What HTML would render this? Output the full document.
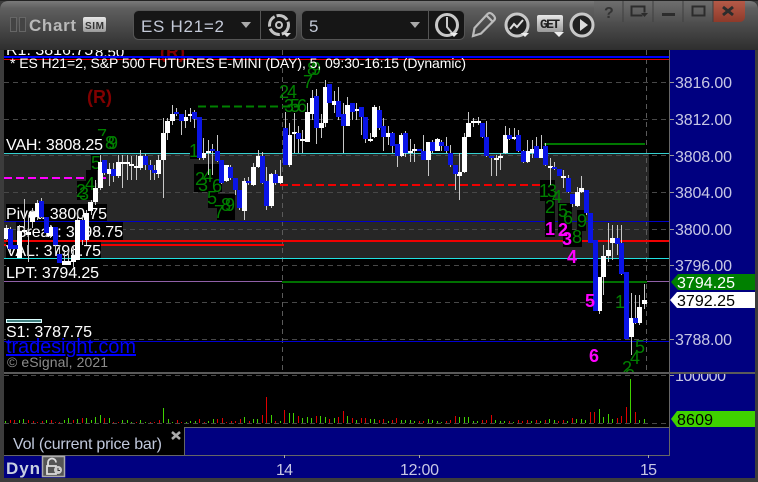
<!DOCTYPE html>
<html><head><meta charset="utf-8"><title>Chart</title>
<style>
html,body{margin:0;padding:0;background:#333;width:758px;height:482px;overflow:hidden}
svg{display:block;position:absolute;left:0;top:0}
text{font-family:"Liberation Sans",sans-serif;white-space:pre}
.ax{font-size:16px;fill:#c8c8e4}
.lb{font-size:16px;fill:#fff}
.n{font-size:18px;fill:#008000}
.m{font-size:18px;fill:#ff00ff;font-weight:bold}
.bg{fill:#000}
</style></head><body>
<svg width="758" height="482" viewBox="0 0 758 482" xmlns="http://www.w3.org/2000/svg">
<defs>
<linearGradient id="tb" x1="0" y1="0" x2="0" y2="1"><stop offset="0" stop-color="#7a7a7a"/><stop offset=".15" stop-color="#5f5f5f"/><stop offset="1" stop-color="#2e2e2e"/></linearGradient>
<linearGradient id="wb" x1="0" y1="0" x2="0" y2="1"><stop offset="0" stop-color="#6e6e6e"/><stop offset="1" stop-color="#505050"/></linearGradient>
<linearGradient id="rb" x1="0" y1="0" x2="0" y2="1"><stop offset="0" stop-color="#b55a48"/><stop offset="1" stop-color="#8e3a2a"/></linearGradient>
<linearGradient id="get" x1="0" y1="0" x2="0" y2="1"><stop offset="0" stop-color="#e8e8e8"/><stop offset="1" stop-color="#9a9a9a"/></linearGradient>
<clipPath id="chart"><rect x="4" y="50" width="665" height="322"/></clipPath>
<clipPath id="axv"><rect x="670" y="374" width="85" height="20"/></clipPath>
</defs>
<!-- frame -->
<rect width="758" height="482" fill="#3c3c3c"/>
<path d="M0 50V10Q0 1 9 1H749Q758 1 758 10V50Z" fill="url(#tb)"/>
<rect x="0" y="0" width="758" height="1" fill="#222"/>
<rect x="4" y="50" width="665" height="377" fill="#000"/>
<rect x="669" y="50" width="86" height="428" fill="#000080"/>
<rect x="4" y="427" width="751" height="51" fill="#000080"/>
<rect x="4" y="427" width="180" height="28" fill="#000"/>
<rect x="184" y="427" width="485" height="1" fill="#666"/>
<rect x="184" y="427" width="1" height="28" fill="#666"/>
<rect x="4" y="455" width="666" height="1" fill="#666"/>
<rect x="669" y="50" width="1" height="406" fill="#666"/>
<!-- toolbar -->
<rect x="10.500" y="17.500" width="6" height="14" fill="#444" stroke="#666"/>
<rect x="19.500" y="17.500" width="6" height="14" fill="#444" stroke="#666"/>
<text x="29" y="31" style="font-size:17px;font-weight:bold;fill:#b8b8b8" textLength="47">Chart</text>
<rect x="83" y="17" width="23" height="15" rx="2" fill="url(#get)"/>
<text x="85" y="29" style="font-size:10px;font-weight:bold;fill:#333" textLength="19">SIM</text>
<rect x="133.500" y="10.500" width="163" height="29" rx="5" fill="#161616" stroke="#555"/>
<rect x="260" y="11" width="1" height="28" fill="#555"/>
<text x="141" y="32" style="font-size:17px;fill:#c4cad8" textLength="83">ES H21=2</text>
<path d="M241 22h10l-5 6z" fill="#aaa"/>
<circle cx="279" cy="25" r="9.500" fill="none" stroke="#c4c4c4" stroke-width="3" stroke-dasharray="12 2"/>
<circle cx="279" cy="25" r="3" fill="none" stroke="#c4c4c4" stroke-width="2"/>
<path d="M283 33h8l-4 4z" fill="#ddd"/>
<rect x="301.500" y="10.500" width="163" height="29" rx="5" fill="#161616" stroke="#555"/>
<rect x="428" y="11" width="1" height="28" fill="#555"/>
<text x="309" y="32" style="font-size:17px;fill:#c4cad8">5</text>
<path d="M410 22h10l-5 6z" fill="#aaa"/>
<circle cx="447" cy="25" r="10.500" fill="none" stroke="#c8c8c8" stroke-width="3"/>
<path d="M447 17v10l5 6" fill="none" stroke="#c8c8c8" stroke-width="2"/>
<path d="M450 33h8l-4 4z" fill="#eee"/>
<path d="M473 36l1.500-8 13-14q2-2 4.500 0l2 2q2 2.500 0 4.500l-13 13z M487 16l6 6" fill="none" stroke="#bbb" stroke-width="2.200"/>
<circle cx="517" cy="25" r="11" fill="#222" stroke="#c8c8c8" stroke-width="3"/>
<path d="M510 29l4-5 3 3 6-7" fill="none" stroke="#ddd" stroke-width="2"/>
<path d="M521 33h8l-4 4z" fill="#eee"/>
<rect x="537" y="15" width="26" height="17" rx="2" fill="url(#get)"/>
<text x="540" y="28" style="font-size:13px;font-weight:bold;font-family:'Liberation Mono',monospace;fill:#222" textLength="20">GET</text>
<path d="M554 32h10l-5 5z" fill="#eee"/>
<circle cx="582" cy="25" r="11" fill="#222" stroke="#c8c8c8" stroke-width="3"/>
<path d="M580 19l8 6-8 6z" fill="#ddd"/>
<!-- window buttons -->
<path d="M594 1H713V22H600Q594 22 594 16Z" fill="url(#wb)"/>
<path d="M713 1H745V16Q745 22 739 22H713Z" fill="url(#rb)"/>
<path d="M623 1v21M653 1v21M683 1v21M713 1v21" stroke="#3f3f3f"/>
<text x="604" y="18" style="font-size:16px;font-weight:bold;fill:#333">?</text>
<path d="M642.500 15.500h-11v-9h13v6" fill="none" stroke="#2c2c2c" stroke-width="2"/>
<path d="M641 13h7l-3.500 4z" fill="#2c2c2c"/>
<rect x="662" y="13" width="13" height="3" fill="#2c2c2c"/>
<rect x="692.500" y="6.500" width="12" height="9" fill="none" stroke="#2c2c2c" stroke-width="2"/>
<path d="M723 7l10 8M733 7l-10 8" stroke="#2c2c2c" stroke-width="3"/>

<g clip-path="url(#chart)">
<!-- value area -->
<rect x="4" y="153" width="645" height="105" fill="#262626"/>
<!-- grid -->
<path d="M4 82.500H669M4 119.500H669M4 155.500H669M4 192.500H669M4 229.500H669M4 265.500H669M4 302.500H669M4 339.500H669" stroke="#484848" stroke-dasharray="5 4" fill="none"/>
<path d="M282.500 50V373M646.500 50V373" stroke="#5a5a5a" stroke-dasharray="5 4" fill="none"/>
<!-- clipped top labels -->
<text x="6" y="55" class="lb">R1: 3816.75</text>
<text x="95" y="57" class="lb" style="font-size:15px">8.50</text>
<text x="160" y="58" style="font-size:18px;font-weight:bold;fill:#800000">(R)</text>
<rect x="4" y="56" width="665" height="2" fill="#0000ff"/>
<rect x="4" y="59" width="665" height="1" fill="#e00000"/>
<text x="87" y="103" style="font-size:18px;font-weight:bold;fill:#800000">(R)</text>
<!-- level lines -->
<rect x="4" y="153" width="665" height="1" fill="#35d0d0"/>
<rect x="4" y="258" width="665" height="1" fill="#20e0e0"/>
<rect x="4" y="221" width="665" height="1" fill="#0000c8"/>
<rect x="4" y="240" width="665" height="2" fill="#f00000"/>
<rect x="4" y="244" width="280" height="2" fill="#f00000"/>
<rect x="4" y="281" width="665" height="1" fill="#9060a8"/>
<rect x="282" y="281" width="365" height="2" fill="#007000"/>
<rect x="4" y="341" width="665" height="1" fill="#0000d0"/>
<rect x="544" y="143" width="101" height="2" fill="#007800"/>
<path d="M198 106.500H300" stroke="#008000" stroke-width="2" stroke-dasharray="8 4" fill="none"/>
<path d="M4 178H106" stroke="#ff00ff" stroke-width="2" stroke-dasharray="8 4" fill="none"/>
<path d="M280 185H545" stroke="#f00000" stroke-width="2" stroke-dasharray="8 4" fill="none"/>
<!-- sequence numbers -->
<g class="bg">
<rect x="91" y="155" width="9" height="15"/><rect x="86" y="170" width="11" height="13"/><rect x="77" y="181" width="18" height="19"/>
<rect x="190" y="143" width="10" height="16"/><rect x="194" y="164" width="28" height="28"/><rect x="208" y="190" width="10" height="18"/><rect x="217" y="194" width="18" height="26"/>
<rect x="540" y="180" width="15" height="21"/><rect x="545" y="201" width="10" height="36"/><rect x="558" y="203" width="14" height="30"/><rect x="577" y="210" width="9" height="21"/><rect x="563" y="230" width="19" height="17"/>
</g>
<g class="n">
<text x="97" y="142">7</text><text x="105" y="149">8</text><text x="108" y="149">9</text>
<text x="91" y="169">5</text><text x="85" y="190">4</text><text x="76" y="197">2</text><text x="79" y="200">3</text>
<text x="189" y="157">1</text><text x="195" y="185">2</text><text x="203" y="182">4</text><text x="198" y="191">3</text><text x="212" y="192">6</text><text x="207" y="204">5</text><text x="214" y="218">7</text><text x="221" y="211">8</text><text x="225" y="211">9</text>
<text x="279" y="98">2</text><text x="287" y="98">4</text><text x="284" y="112">3</text><text x="290" y="112">5</text><text x="297" y="112">6</text><text x="303" y="88">7</text><text x="307" y="75">8</text><text x="311" y="75">9</text>
<text x="539" y="197">1</text><text x="547" y="197">3</text><text x="552" y="203">4</text><text x="545" y="213">2</text><text x="558" y="217">5</text><text x="563" y="224">6</text><text x="577" y="227">9</text><text x="572" y="243">8</text>
</g>
<!-- labels -->
<rect x="6" y="136" width="97" height="17" class="bg"/><text x="6" y="150" class="lb" textLength="97">VAH: 3808.25</text>
<rect x="6" y="204" width="101" height="17" class="bg"/><text x="6" y="219" class="lb" textLength="101">Pivot: 3800.75</text>
<rect x="16" y="222" width="107" height="18" class="bg"/><text x="16" y="237" class="lb" textLength="107">Break: 3798.75</text>
<rect x="6" y="242" width="95" height="16" class="bg"/><text x="6" y="256" class="lb" textLength="95">VAL: 3796.75</text>
<rect x="6" y="264" width="93" height="17" class="bg"/><text x="6" y="278" class="lb" textLength="93">LPT: 3794.25</text>
<rect x="6" y="324" width="86" height="17" class="bg"/><text x="6" y="337" class="lb" textLength="86">S1: 3787.75</text>
<rect x="6.500" y="319.500" width="35" height="3" fill="#408080" stroke="#dff" stroke-width="1"/>
<!-- wicks -->
<path stroke="#c8c8c8" fill="none" d="M6.500 225V240M10.500 227V252M19.500 225V258M24.500 199V232M28.500 215V262M32.500 208V228M37.500 200V220M41.500 198V218M46.500 217V237M50.500 225V238M55.500 227V255M59.500 245V263M64.500 250V265M68.500 250V265M73.500 245V267M77.500 210V260M82.500 215V245M86.500 210V245M91.500 200V215M95.500 180V205M100.500 155V190M104.500 160V175M109.500 163V186M113.500 163V182M118.500 155V178M122.500 155V188M127.500 155V180M131.500 156V180M136.500 155V180M140.500 150V170M145.500 154V170M150.500 160V180M154.500 165V180M158.500 155V178M163.500 118V198M167.500 118V140M172.500 105V125M176.500 108V116M181.500 114V135M185.500 110V128M190.500 108V122M194.500 110V128M199.500 117V160M203.500 138V160M208.500 140V175M212.500 144V175M217.500 135V162M221.500 160V184M226.500 165V182M230.500 165V180M235.500 178V195M239.500 190V210M244.500 178V220M248.500 177V185M253.500 163V186M258.500 150V168M262.500 152V184M266.500 167V210M271.500 173V208M275.500 170V185M280.500 160V184M285.500 112V165M289.500 123V167M294.500 113V153M298.500 126V153M302.500 130V153M307.500 103V142M312.500 90V120M316.500 89V144M321.500 114V138M325.500 80V127M334.500 91V113M338.500 87V120M343.500 103V153M347.500 97V126M352.500 103V120M356.500 103V120M361.500 107V135M365.500 117V143M370.500 133V142M374.500 105V138M379.500 106V130M383.500 118V151M388.500 126V145M392.500 132V153M397.500 144V167M401.500 133V157M405.500 131V157M410.500 139V162M414.500 144V162M423.500 135V160M428.500 142V176M432.500 140V153M437.500 138V151M441.500 140V151M446.500 137V153M450.500 145V167M455.500 165V190M459.500 153V200M464.500 133V173M468.500 112V137M473.500 118V127M478.500 117V125M482.500 123V138M486.500 121V157M491.500 156V176M496.500 155V176M500.500 153V170M505.500 126V154M509.500 128V140M514.500 128V140M518.500 130V152M523.500 150V163M527.500 140V163M532.500 140V158M536.500 137V158M541.500 135V158M545.500 143V166M550.500 158V185M554.500 162V170M563.500 170V188M568.500 175V193M572.500 194V207M577.500 187V207M581.500 176V193M586.500 190V215M599.500 277V314M603.500 245V295M608.500 223V262M612.500 225V260M617.500 225V255M621.500 225V275M631.500 293V355M635.500 295V324M639.500 295V325M644.500 284V309"/>
<!-- white bodies -->
<path fill="#fff" d="M4 228h5v11h-5zM17 231h5v27h-5zM22 230h5v2h-5zM26 232h5v3h-5zM30 212h5v10h-5zM35 203h5v14h-5zM48 227h5v9h-5zM62 261h5v4h-5zM66 261h5v4h-5zM71 255h5v7h-5zM75 220h5v40h-5zM84 213h5v27h-5zM88 202h5v9h-5zM93 188h5v14h-5zM98 162h5v26h-5zM107 169h5v5h-5zM116 162h5v14h-5zM120 162h5v2h-5zM125 162h5v2h-5zM129 164h5v2h-5zM134 166h5v2h-5zM138 156h5v12h-5zM156 160h5v14h-5zM161 133h5v27h-5zM165 121h5v12h-5zM170 114h5v7h-5zM183 117h5v4h-5zM188 114h5v2h-5zM201 153h5v5h-5zM206 151h5v2h-5zM224 165h5v16h-5zM242 181h5v30h-5zM251 167h5v18h-5zM256 156h5v11h-5zM269 174h5v32h-5zM278 176h5v7h-5zM287 135h5v30h-5zM292 132h5v2h-5zM300 139h5v2h-5zM305 112h5v30h-5zM310 98h5v16h-5zM319 123h5v5h-5zM323 87h5v36h-5zM332 101h5v4h-5zM345 105h5v21h-5zM354 109h5v2h-5zM368 139h5v2h-5zM372 107h5v30h-5zM386 133h5v4h-5zM399 135h5v21h-5zM408 151h5v2h-5zM412 149h5v2h-5zM426 142h5v18h-5zM435 139h5v12h-5zM457 172h5v4h-5zM462 137h5v35h-5zM466 123h5v14h-5zM471 121h5v2h-5zM476 121h5v2h-5zM494 158h5v2h-5zM498 156h5v2h-5zM503 135h5v18h-5zM512 137h5v2h-5zM525 151h5v11h-5zM530 149h5v4h-5zM539 149h5v9h-5zM548 166h5v2h-5zM561 176h5v2h-5zM575 192h5v14h-5zM579 188h5v4h-5zM597 277h5v34h-5zM601 256h5v21h-5zM606 250h5v6h-5zM610 238h5v5h-5zM629 318h5v19h-5zM637 307h5v16h-5zM642 300h5v4h-5z"/>
<!-- blue bodies -->
<path fill="#0a14e6" d="M8 229h5v20h-5zM13 245h5v4h-5zM39 201h5v16h-5zM44 217h5v16h-5zM53 227h5v18h-5zM57 254h5v9h-5zM80 220h5v20h-5zM102 160h5v13h-5zM111 169h5v7h-5zM143 156h5v9h-5zM148 165h5v5h-5zM152 170h5v3h-5zM174 112h5v2h-5zM179 114h5v7h-5zM192 112h5v7h-5zM197 117h5v41h-5zM210 149h5v2h-5zM215 151h5v10h-5zM219 160h5v23h-5zM228 167h5v11h-5zM233 178h5v12h-5zM237 190h5v18h-5zM246 181h5v2h-5zM260 156h5v27h-5zM264 181h5v25h-5zM273 174h5v9h-5zM283 128h5v37h-5zM296 133h5v6h-5zM314 96h5v32h-5zM327 84h5v19h-5zM336 101h5v16h-5zM341 114h5v12h-5zM350 103h5v9h-5zM359 107h5v10h-5zM363 117h5v22h-5zM377 110h5v18h-5zM381 126h5v11h-5zM390 133h5v13h-5zM395 144h5v12h-5zM403 133h5v20h-5zM417 149h5v2h-5zM421 151h5v9h-5zM430 142h5v9h-5zM439 142h5v4h-5zM444 146h5v5h-5zM448 153h5v12h-5zM453 165h5v9h-5zM480 123h5v14h-5zM484 137h5v19h-5zM489 156h5v2h-5zM507 135h5v4h-5zM516 135h5v16h-5zM521 151h5v11h-5zM534 146h5v12h-5zM543 146h5v19h-5zM552 167h5v2h-5zM557 169h5v7h-5zM566 178h5v14h-5zM570 194h5v10h-5zM584 190h5v23h-5zM588 213h5v30h-5zM593 240h5v71h-5zM615 238h5v6h-5zM619 243h5v31h-5zM624 272h5v67h-5zM633 318h5v5h-5z"/>
<!-- magenta numbers -->
<g class="m">
<text x="545" y="235">1</text><text x="558" y="236">2</text><text x="562" y="245">3</text><text x="567" y="263">4</text><text x="585" y="307">5</text><text x="589" y="362">6</text>
</g>
<g class="n">
<text x="615" y="308">1</text><text x="635" y="353">5</text><text x="630" y="364">4</text><text x="622" y="374">2</text><text x="625" y="382">3</text>
</g>
<!-- logo -->
<text x="6" y="353" style="font-size:20px;fill:#0000ff;text-decoration:underline" textLength="130">tradesight.com</text>
<text x="7" y="367" style="font-size:14px;fill:#8c8c8c" textLength="101">© eSignal, 2021</text>
<text x="10" y="68" style="font-size:14px;fill:#fff" textLength="456">* ES H21=2, S&amp;P 500 FUTURES E-MINI (DAY), 5, 09:30-16:15 (Dynamic)</text>
</g>
<!-- volume pane -->
<rect x="4" y="372" width="751" height="2" fill="#5a5a5a"/>
<path d="M4 375.500H669M4 423.500H669" stroke="#484848" stroke-dasharray="5 4" fill="none"/>
<path stroke="#3fd200" fill="none" d="M5.500 421V423M19.500 420V423M23.500 419V423M46.500 420V423M64.500 420V423M68.500 418V423M77.500 419V423M86.500 418V423M91.500 420V423M95.500 417V423M100.500 415V423M109.500 418V423M122.500 420V423M127.500 420V423M131.500 422V423M140.500 420V423M145.500 422V423M163.500 408V423M168.500 419V423M172.500 422V423M186.500 422V423M190.500 421V423M195.500 421V423M208.500 421V423M213.500 419V423M244.500 417V423M253.500 419V423M257.500 419V423M271.500 415V423M280.500 421V423M289.500 413V423M293.500 413V423M302.500 418V423M307.500 417V423M311.500 418V423M320.500 416V423M325.500 417V423M334.500 418V423M347.500 416V423M356.500 420V423M370.500 419V423M374.500 419V423M388.500 421V423M401.500 420V423M405.500 420V423M410.500 420V423M414.500 421V423M428.500 419V423M432.500 420V423M437.500 421V423M441.500 422V423M459.500 417V423M464.500 417V423M468.500 417V423M473.500 421V423M477.500 421V423M495.500 420V423M500.500 421V423M504.500 421V423M513.500 422V423M531.500 421V423M540.500 421V423M549.500 419V423M554.500 420V423M567.500 421V423M576.500 419V423M581.500 419V423M585.500 420V423M599.500 409V423M603.500 417V423M608.500 414V423M612.500 419V423M630.500 379V423M639.500 420V423M644.500 419V423"/>
<path stroke="#e00000" fill="none" d="M10.500 420V423M14.500 420V423M28.500 420V423M33.500 421V423M37.500 422V423M42.500 421V423M51.500 420V423M55.500 422V423M59.500 422V423M73.500 420V423M82.500 418V423M104.500 418V423M113.500 422V423M118.500 422V423M136.500 422V423M150.500 422V423M154.500 422V423M159.500 420V423M177.500 420V423M181.500 422V423M199.500 419V423M204.500 422V423M217.500 419V423M222.500 418V423M226.500 422V423M231.500 421V423M235.500 421V423M240.500 419V423M249.500 421V423M262.500 415V423M266.500 397V423M275.500 421V423M284.500 410V423M298.500 416V423M316.500 416V423M329.500 419V423M338.500 417V423M343.500 411V423M352.500 418V423M361.500 418V423M365.500 418V423M379.500 420V423M383.500 419V423M392.500 420V423M396.500 418V423M419.500 421V423M423.500 421V423M446.500 421V423M450.500 420V423M455.500 416V423M482.500 420V423M486.500 420V423M491.500 415V423M509.500 421V423M518.500 420V423M522.500 421V423M527.500 420V423M536.500 420V423M545.500 420V423M558.500 421V423M563.500 420V423M572.500 418V423M590.500 412V423M594.500 412V423M617.500 418V423M621.500 416V423M626.500 407V423M635.500 412V423"/>
<text x="13" y="449" style="font-size:16px;fill:#c0c8dc" textLength="149">Vol (current price bar)</text>
<path d="M172 432l8 7M180 432l-8 7" stroke="#aaa" stroke-width="2.500"/>
<!-- right axis -->
<g class="ax">
<text x="675" y="88" textLength="57">3816.00</text>
<text x="675" y="125" textLength="57">3812.00</text>
<text x="675" y="162" textLength="57">3808.00</text>
<text x="675" y="198" textLength="57">3804.00</text>
<text x="675" y="235" textLength="57">3800.00</text>
<text x="675" y="271" textLength="57">3796.00</text>
<text x="675" y="345" textLength="57">3788.00</text>
<g clip-path="url(#axv)"><text x="675" y="381" textLength="51">100000</text></g>
</g>
<path d="M670 82.500h4M670 119.500h4M670 155.500h4M670 192.500h4M670 229.500h4M670 265.500h4M670 339.500h4M670 375.500h4" stroke="#999" fill="none"/>
<path d="M671 282l7-8H755V290H678Z" fill="#008000"/>
<text x="677" y="288" class="ax" style="fill:#fff" textLength="58">3794.25</text>
<path d="M670 300l7-8H755V308H677Z" fill="#fff"/>
<text x="677" y="306" style="font-size:16px;fill:#000" textLength="58">3792.25</text>
<path d="M671 419l6-8H755V427H677Z" fill="#3fd200"/>
<text x="677" y="425" style="font-size:16px;fill:#000" textLength="36">8609</text>
<!-- time axis -->
<path d="M284.500 455v3M419.500 455v3M648.500 455v3" stroke="#aaa" fill="none"/>
<g class="ax">
<text x="276" y="475" textLength="17">14</text>
<text x="400" y="475" textLength="39">12:00</text>
<text x="640" y="475" textLength="17">15</text>
</g>
<text x="6" y="474" style="font-size:17px;font-weight:bold;fill:#c8d0e0" textLength="34">Dyn</text>
<rect x="42.500" y="456.500" width="22" height="20" fill="#555" stroke="#aaa" stroke-width="1.500"/>
<path d="M48 466v-3.500a4 4 0 0 1 8 0M47 466h9v8h-9z" fill="none" stroke="#ddd" stroke-width="1.800"/>
<circle cx="58" cy="470" r="4" fill="#ccc"/>
<path d="M58 468v2.500h2" stroke="#333" fill="none"/>
</svg>
</body></html>
